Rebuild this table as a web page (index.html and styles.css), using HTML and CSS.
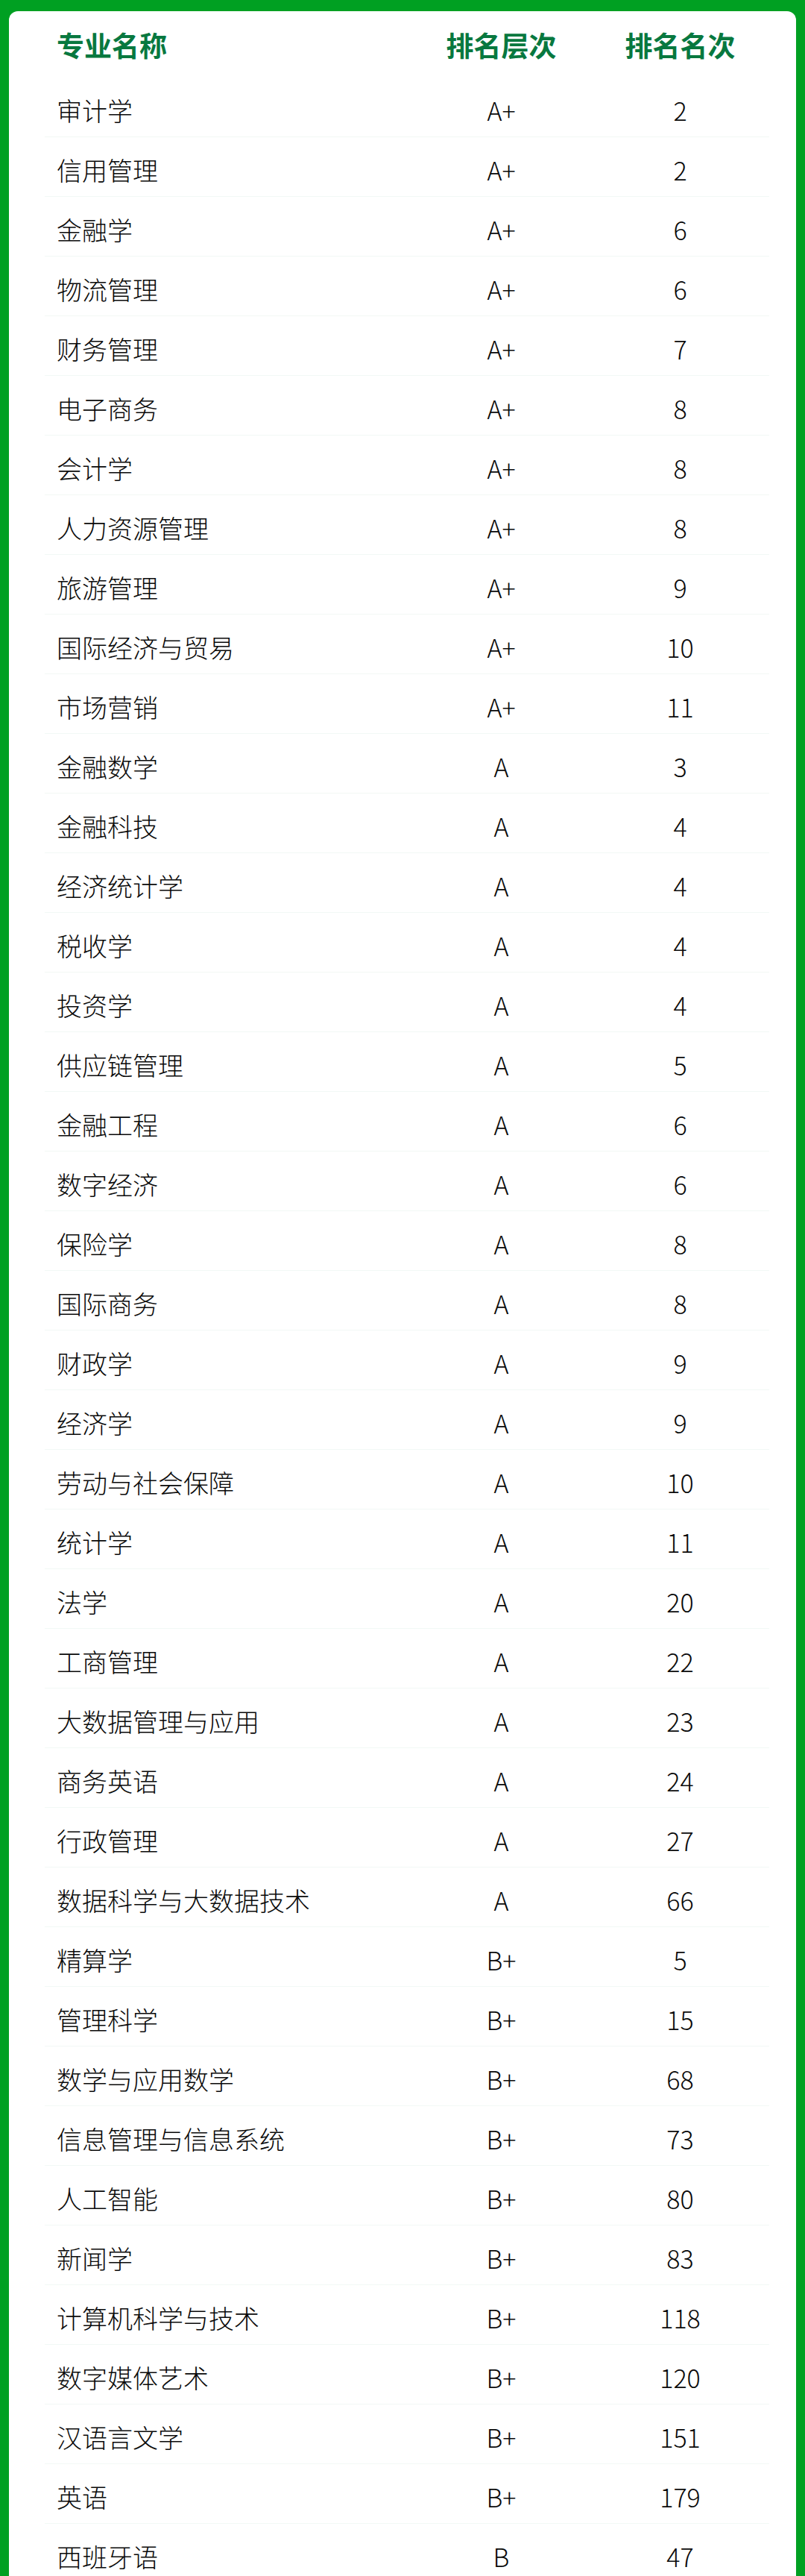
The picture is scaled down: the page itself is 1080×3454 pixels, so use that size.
FILE: index.html
```html
<!DOCTYPE html>
<html lang="zh-CN">
<head>
<meta charset="utf-8">
<title>专业排名</title>
<link rel="stylesheet" href="styles.css">
</head>
<body>
<div class="page">
  <div class="card">
    <div class="table">
      <div class="row head">
        <div class="c1">专业名称</div><div class="c2">排名层次</div><div class="c3">排名名次</div>
      </div>
      <div class="row"><div class="c1">审计学</div><div class="c2">A+</div><div class="c3">2</div></div>
      <div class="row"><div class="c1">信用管理</div><div class="c2">A+</div><div class="c3">2</div></div>
      <div class="row"><div class="c1">金融学</div><div class="c2">A+</div><div class="c3">6</div></div>
      <div class="row"><div class="c1">物流管理</div><div class="c2">A+</div><div class="c3">6</div></div>
      <div class="row"><div class="c1">财务管理</div><div class="c2">A+</div><div class="c3">7</div></div>
      <div class="row"><div class="c1">电子商务</div><div class="c2">A+</div><div class="c3">8</div></div>
      <div class="row"><div class="c1">会计学</div><div class="c2">A+</div><div class="c3">8</div></div>
      <div class="row"><div class="c1">人力资源管理</div><div class="c2">A+</div><div class="c3">8</div></div>
      <div class="row"><div class="c1">旅游管理</div><div class="c2">A+</div><div class="c3">9</div></div>
      <div class="row"><div class="c1">国际经济与贸易</div><div class="c2">A+</div><div class="c3">10</div></div>
      <div class="row"><div class="c1">市场营销</div><div class="c2">A+</div><div class="c3">11</div></div>
      <div class="row"><div class="c1">金融数学</div><div class="c2">A</div><div class="c3">3</div></div>
      <div class="row"><div class="c1">金融科技</div><div class="c2">A</div><div class="c3">4</div></div>
      <div class="row"><div class="c1">经济统计学</div><div class="c2">A</div><div class="c3">4</div></div>
      <div class="row"><div class="c1">税收学</div><div class="c2">A</div><div class="c3">4</div></div>
      <div class="row"><div class="c1">投资学</div><div class="c2">A</div><div class="c3">4</div></div>
      <div class="row"><div class="c1">供应链管理</div><div class="c2">A</div><div class="c3">5</div></div>
      <div class="row"><div class="c1">金融工程</div><div class="c2">A</div><div class="c3">6</div></div>
      <div class="row"><div class="c1">数字经济</div><div class="c2">A</div><div class="c3">6</div></div>
      <div class="row"><div class="c1">保险学</div><div class="c2">A</div><div class="c3">8</div></div>
      <div class="row"><div class="c1">国际商务</div><div class="c2">A</div><div class="c3">8</div></div>
      <div class="row"><div class="c1">财政学</div><div class="c2">A</div><div class="c3">9</div></div>
      <div class="row"><div class="c1">经济学</div><div class="c2">A</div><div class="c3">9</div></div>
      <div class="row"><div class="c1">劳动与社会保障</div><div class="c2">A</div><div class="c3">10</div></div>
      <div class="row"><div class="c1">统计学</div><div class="c2">A</div><div class="c3">11</div></div>
      <div class="row"><div class="c1">法学</div><div class="c2">A</div><div class="c3">20</div></div>
      <div class="row"><div class="c1">工商管理</div><div class="c2">A</div><div class="c3">22</div></div>
      <div class="row"><div class="c1">大数据管理与应用</div><div class="c2">A</div><div class="c3">23</div></div>
      <div class="row"><div class="c1">商务英语</div><div class="c2">A</div><div class="c3">24</div></div>
      <div class="row"><div class="c1">行政管理</div><div class="c2">A</div><div class="c3">27</div></div>
      <div class="row"><div class="c1">数据科学与大数据技术</div><div class="c2">A</div><div class="c3">66</div></div>
      <div class="row"><div class="c1">精算学</div><div class="c2">B+</div><div class="c3">5</div></div>
      <div class="row"><div class="c1">管理科学</div><div class="c2">B+</div><div class="c3">15</div></div>
      <div class="row"><div class="c1">数学与应用数学</div><div class="c2">B+</div><div class="c3">68</div></div>
      <div class="row"><div class="c1">信息管理与信息系统</div><div class="c2">B+</div><div class="c3">73</div></div>
      <div class="row"><div class="c1">人工智能</div><div class="c2">B+</div><div class="c3">80</div></div>
      <div class="row"><div class="c1">新闻学</div><div class="c2">B+</div><div class="c3">83</div></div>
      <div class="row"><div class="c1">计算机科学与技术</div><div class="c2">B+</div><div class="c3">118</div></div>
      <div class="row"><div class="c1">数字媒体艺术</div><div class="c2">B+</div><div class="c3">120</div></div>
      <div class="row"><div class="c1">汉语言文学</div><div class="c2">B+</div><div class="c3">151</div></div>
      <div class="row"><div class="c1">英语</div><div class="c2">B+</div><div class="c3">179</div></div>
      <div class="row"><div class="c1">西班牙语</div><div class="c2">B</div><div class="c3">47</div></div>
    </div>
  </div>
</div>
</body>
</html>
```

FILE: styles.css
```css
html, body {
  margin: 0;
  padding: 0;
}
body {
  background: #00a022;
  font-family: "Noto Sans CJK SC", "Noto Sans", sans-serif;
  color: #0a0a0a;
}
.page {
  padding: 15px 12px 0;
}
.card {
  background: #ffffff;
  border-radius: 12px 12px 0 0;
  padding: 0 36px 40px 48px;
}
.table {
  display: flex;
  flex-direction: column;
}
.row {
  display: grid;
  grid-template-columns: 492px 241px 239px;
  align-items: center;
  box-sizing: border-box;
  height: 81px;
  padding-top: 8px;
  border-bottom: 1px solid #f2f8f5;
  font-size: 34px;
  font-weight: 300;
  line-height: 1;
}
.row.head {
  height: 89px;
  padding-top: 2px;
  border-bottom: none;
  font-size: 37px;
  font-weight: 700;
  color: #08783f;
}
.row + .row {
  height: 80px;
}
.c1 {
  padding-left: 16px;
}
.c2, .c3 {
  text-align: center;
}
```
